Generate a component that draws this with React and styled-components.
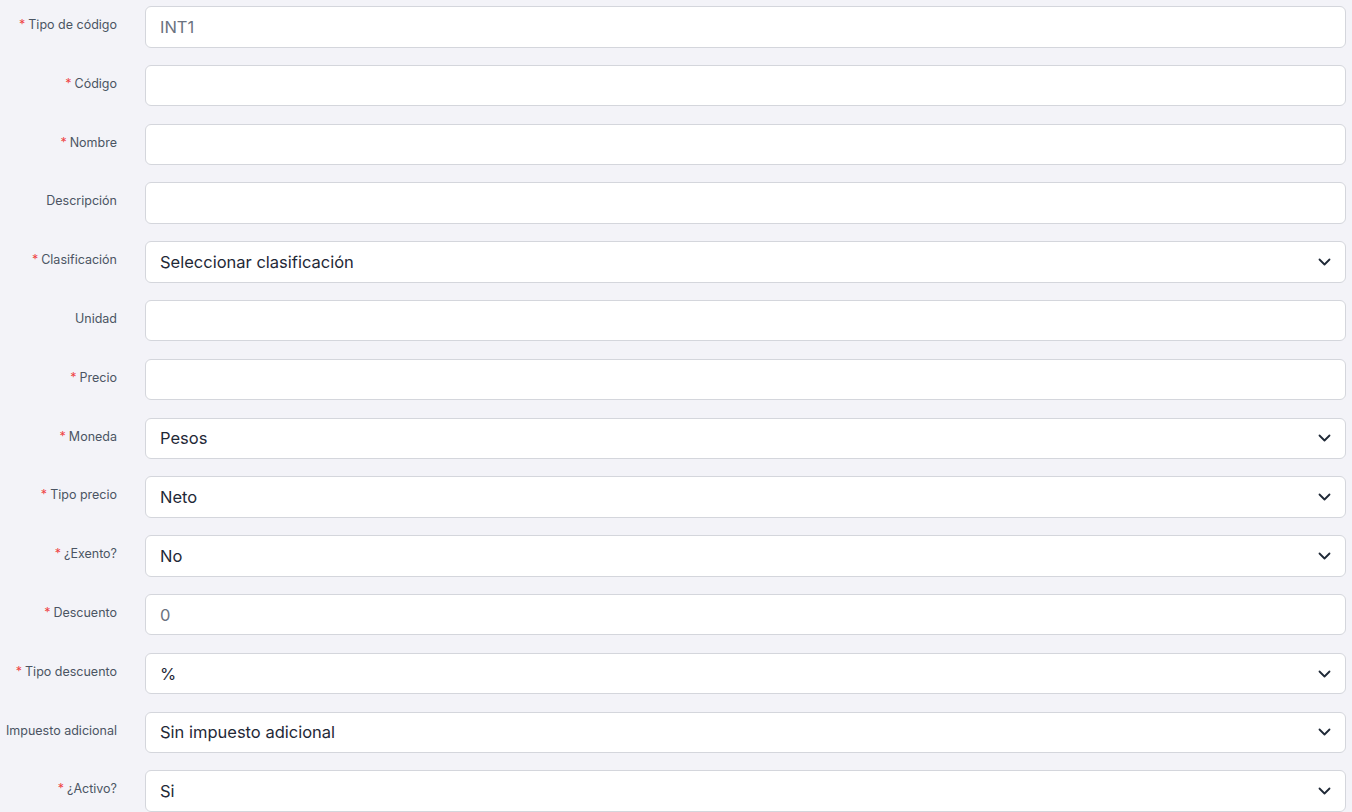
import React from "react";
import styled, { createGlobalStyle } from "styled-components";

const GlobalStyle = createGlobalStyle`
  html, body {
    margin: 0;
    padding: 0;
    background: #f3f3f8;
    font-family: "Inter", "Noto Sans", sans-serif;
  }
`;

const Form = styled.form`
  display: flex;
  flex-direction: column;
  gap: 17.3px;
  padding: 6px 6px 0 0;
  width: 1352px;
  box-sizing: border-box;
`;

const Row = styled.div`
  display: grid;
  grid-template-columns: 117px 1fr;
  column-gap: 28px;
  align-items: start;
`;

const Label = styled.label`
  text-align: right;
  font-size: 12.5px;
  line-height: 16px;
  color: #4b5563;
  padding-top: 11px;
  white-space: nowrap;
  .req {
    color: #ef4444;
    margin-right: 3px;
  }
`;

const Field = styled.div`
  position: relative;
  height: 41.5px;
  background: #fff;
  border: 1px solid #d4d6dc;
  border-radius: 6px;
  box-sizing: border-box;
  display: flex;
  align-items: center;
  padding: 0 14px;
  font-size: 16.5px;
  color: ${(p) => (p.$muted ? "#6b7280" : "#1f2937")};
`;

const Chevron = styled.svg`
  position: absolute;
  right: 14px;
  top: 50%;
  margin-top: -6px;
  width: 13px;
  height: 12px;
`;

const rows = [
  { label: "Tipo de código", req: true, value: "INT1", muted: true },
  { label: "Código", req: true },
  { label: "Nombre", req: true },
  { label: "Descripción" },
  { label: "Clasificación", req: true, value: "Seleccionar clasificación", select: true },
  { label: "Unidad" },
  { label: "Precio", req: true },
  { label: "Moneda", req: true, value: "Pesos", select: true },
  { label: "Tipo precio", req: true, value: "Neto", select: true },
  { label: "¿Exento?", req: true, value: "No", select: true },
  { label: "Descuento", req: true, value: "0", muted: true },
  { label: "Tipo descuento", req: true, value: "%", select: true },
  { label: "Impuesto adicional", value: "Sin impuesto adicional", select: true },
  { label: "¿Activo?", req: true, value: "Si", select: true },
];

export default function App() {
  return (
    <>
      <GlobalStyle />
      <Form>
        {rows.map((r) => (
          <Row key={r.label}>
            <Label>
              {r.req && <span className="req">*</span>}
              {r.label}
            </Label>
            <Field $muted={r.muted}>
              {r.value}
              {r.select && (
                <Chevron viewBox="0 0 13 12">
                  <path
                    d="M1.5 3.5 L6.5 8.5 L11.5 3.5"
                    fill="none"
                    stroke="#1f2937"
                    strokeWidth="1.8"
                    strokeLinecap="round"
                    strokeLinejoin="round"
                  />
                </Chevron>
              )}
            </Field>
          </Row>
        ))}
      </Form>
    </>
  );
}
